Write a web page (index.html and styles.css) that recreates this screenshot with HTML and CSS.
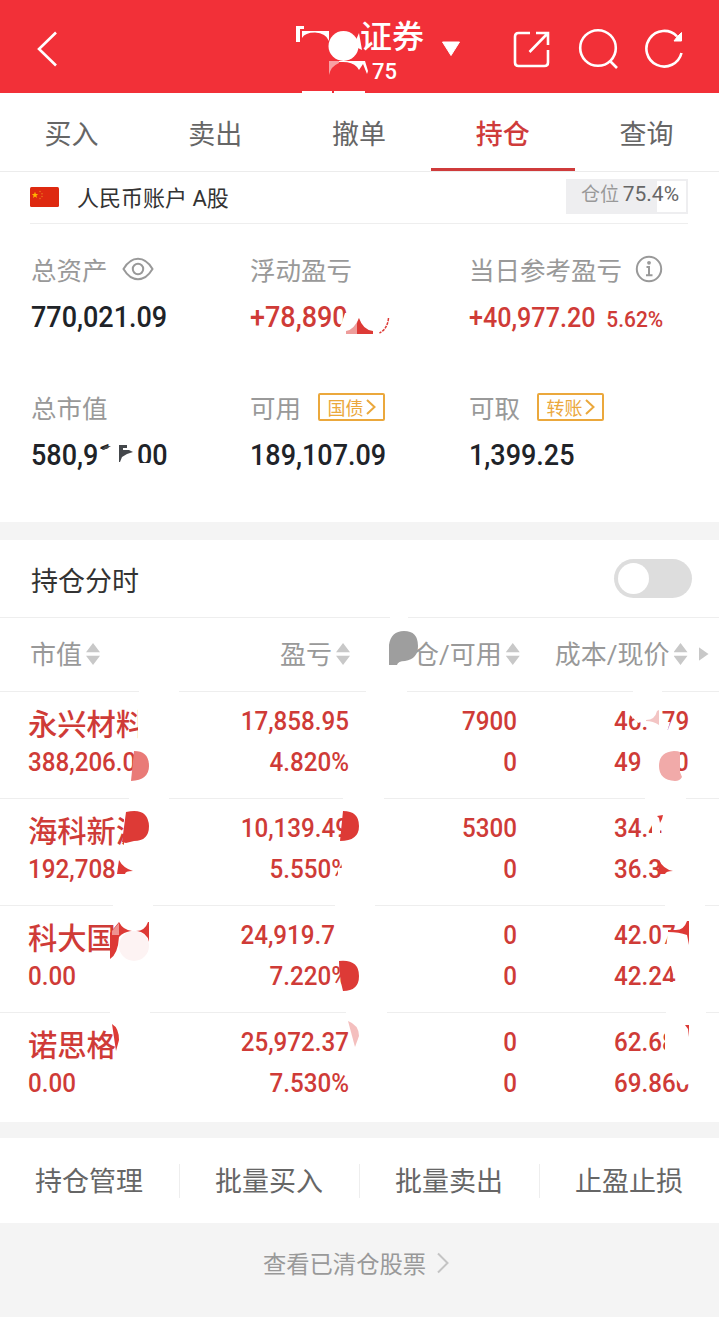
FILE: index.html
```html
<!DOCTYPE html>
<html lang="zh-CN">
<head>
  <meta charset="utf-8">
  <title>持仓</title>
  <link rel="stylesheet" href="styles.css">
</head>
<body>
  <header class="topbar">
    <svg class="back" width="24" height="38" viewBox="0 0 24 38"><path d="M21 2.500L4 19l17 16.500"/></svg>
    <div class="title">
      <h1>证券</h1>
      <p>75</p>
    </div>
    <svg class="caret" width="20" height="16" viewBox="0 0 20 16"><path d="M1.500 1h17L10 14.500z"/></svg>
    <svg class="tool share" width="40" height="40" viewBox="0 0 40 40"><path d="M18 4H6.500Q3 4 3 7.500v26Q3 37 6.500 37h26q3.500 0 3.500-3.500V21M24 4h12v12M35.500 4.500L17.500 23"/></svg>
    <svg class="tool search" width="42" height="42" viewBox="0 0 42 42"><circle cx="20" cy="20" r="17.800"/><path d="M32 33l7 7"/></svg>
    <svg class="tool reload" width="42" height="42" viewBox="0 0 42 42"><path d="M37.500 25A17.800 17.800 0 1 1 33 8.300"/><path class="solid" d="M37.500 4.500V13H30l3-4z"/></svg>
    <svg class="marks" width="719" height="94" viewBox="0 0 719 94">
      <path fill="#fff" d="M296 26h8v3h-4v13h-4zM302 31h27v10q-3-8-14-8.500Q305 32.500 302 38z"/>
      <path class="tint" d="M329 61h10v2q-8 3-10 12z"/>
      <path fill="#fff" d="M339 61h26l3 10-1 3-4-10-4 6-2-3q-5-5-14-5h-4z"/>
      <path fill="#fff" d="M356 40l3-7 3 17-6-3zM302 91h30v3h-30zM334 91h31v3h-31z"/>
      <circle fill="#fff" cx="343.500" cy="46" r="15"/>
    </svg>
  </header>

  <nav class="tabs">
    <a>买入</a>
    <a>卖出</a>
    <a>撤单</a>
    <a class="active">持仓</a>
    <a>查询</a>
  </nav>

  <section class="account">
    <svg class="flag" width="29" height="20" viewBox="0 0 29 20">
      <rect width="29" height="20" rx="1.500" fill="#de2910"/>
      <path d="M5 4.800l.9 2.200 2.300.1-1.800 1.500.6 2.300-2-1.300-2 1.300.6-2.300-1.800-1.500 2.300-.1z" fill="#ffb400"/>
      <g fill="#e8741c"><circle cx="10" cy="4.500" r=".8"/><circle cx="12" cy="6.800" r=".8"/><circle cx="12" cy="9.500" r=".8"/><circle cx="10" cy="11.500" r=".8"/></g>
    </svg>
    <span class="account-name">人民币账户 A股</span>
    <span class="position">仓位 <b>75.4%</b></span>
  </section>

  <section class="summary">
    <div class="item">
      <div class="label"><span>总资产</span>
        <svg class="eye" width="32" height="24" viewBox="0 0 32 24"><path d="M1.500 12Q7.500 1.800 16 1.800T30.500 12Q24.500 22.200 16 22.200T1.500 12z"/><circle cx="16" cy="12" r="5.200"/></svg>
      </div>
      <div class="value">770,021.09</div>
    </div>
    <div class="item">
      <div class="label"><span>浮动盈亏</span></div>
      <div class="value red">+78,890</div>
    </div>
    <div class="item">
      <div class="label"><span>当日参考盈亏</span>
        <svg class="info" width="28" height="28" viewBox="0 0 28 28"><circle cx="14" cy="14" r="12.200"/><path d="M11.500 12H14v8M11 20.200h6.500"/><circle class="dot" cx="14" cy="7.800" r="1.900"/></svg>
      </div>
      <div class="value red day">+40,977.20 <small>5.62%</small></div>
    </div>
    <div class="item">
      <div class="label"><span>总市值</span></div>
      <div class="value">580,91<span class="gap"></span>00</div>
    </div>
    <div class="item">
      <div class="label"><span>可用</span> <a class="tag">国债<svg width="10" height="18" viewBox="0 0 10 18"><path d="M1 2l7.500 7L1 16"/></svg></a></div>
      <div class="value">189,107.09</div>
    </div>
    <div class="item">
      <div class="label"><span>可取</span> <a class="tag">转账<svg width="10" height="18" viewBox="0 0 10 18"><path d="M1 2l7.500 7L1 16"/></svg></a></div>
      <div class="value">1,399.25</div>
    </div>
    <svg class="marks" width="719" height="298" viewBox="0 223 719 298">
      <path class="cover" d="M341 324l4-12h8v22h-18zM98 448h8l5-2v24h-13zM111 440h25v30h-25zM136 462h14v8h-14z"/>
      <path fill="#ee9d9b" d="M346 333v-3q8-1 13-13v16z"/>
      <path class="ink" d="M357 333v-11l2-5q4 12 14 13v3z"/>
      <path stroke="#dd3a36" stroke-width="1.500" stroke-dasharray="3 1" d="M388.500 317q-1 11-9 15"/>
      <path class="dark" d="M102 449l3-4h6l-7 4zM119 444h8v3h-4v2h6l4 2-6 2-5 3-2 5h-1z"/>
    </svg>
  </section>

  <section class="holdings">
    <div class="timeline">
      <h2>持仓分时</h2>
      <span class="switch"></span>
    </div>
    <div class="row head">
      <span>市值<i class="sort"></i></span>
      <span>盈亏<i class="sort"></i></span>
      <span>仓/可用<i class="sort"></i></span>
      <span>成本/现价<i class="sort"></i></span>
      <i class="more"></i>
    </div>
    <div class="row">
      <div><strong>永兴材料</strong><span class="num">388,206.0</span></div>
      <div class="num">17,858.95<br>4.820%</div>
      <div class="num">7900<br>0</div>
      <div class="num">46.<span class="gap wide"></span>79<br>49<span class="gap wider"></span>0</div>
    </div>
    <div class="row">
      <div><strong>海科新源</strong><span class="num">192,708</span></div>
      <div class="num">10,139.49<br>5.550%</div>
      <div class="num">5300<br>0</div>
      <div class="num">34.4<br>36.3</div>
    </div>
    <div class="row">
      <div><strong>科大国</strong><span class="num">0.00</span></div>
      <div class="num"><span class="cut">24,919.7</span><br>7.220%</div>
      <div class="num">0<br>0</div>
      <div class="num">42.07<br>42.24</div>
    </div>
    <div class="row">
      <div><strong>诺思格</strong><span class="num">0.00</span></div>
      <div class="num">25,972.37<br>7.530%</div>
      <div class="num">0<br>0</div>
      <div class="num">62.68<br>69.860</div>
    </div>
    <svg class="marks" width="719" height="582" viewBox="0 540 719 582">
      <g class="cover">
        <path d="M390 616h18v3h-18zM139 690h40v3h-40zM366 690h41v3h-41zM633 690h29v3h-29z"/>
        <path d="M129 797h40v3h-40zM343 797h41v3h-41zM645 797h41v3h-41z"/>
        <path d="M113 904h40v3h-40zM335 904h40v3h-40zM665 904h40v3h-40z"/>
        <path d="M110 1011h40v3h-40zM346 1011h41v3h-41zM666 1011h40v3h-40z"/>
        <path d="M138 706h14v36h-14zM629 708h12v14l-3 1-8-8zM664 722h6l-3 10h-3z"/>
        <path d="M124 812h28v36h-28zM338 868h4l-2-11h12v25h-14zM643 814h12v9l-14 6zM652 814h8v24h-8z"/>
        <path d="M668 932h14v16h-16zM670 962h10v12h-7zM668 982h12v8h-12zM665 1030h12v26h-12z"/>
        <path d="M672 1072l4 3q2-6 4-7h11v14q-6 6-12 1z"/>
      </g>
      <path fill="#9e9e9e" d="M389 665v-20q2-14 15-14 14 0 14 15 0 13-13 15-7 0-8 4z"/>
      <path fill="#e97a77" d="M134 751q15 0 15 15 0 14-18 15z"/>
      <path fill="#f1aaa9" d="M680 752q-2-1-6-1-15 1-15 15t16 15q5 0 7-4l-2-5z"/>
      <path fill="#f3c5c4" d="M646 720q9 0 11-9l2-1v15q-6-4-13-4z"/>
      <g class="ink">
        <path d="M126 812q22-5 23 14 0 15-15 15l-8 2-4-1q2-15 4-30zM343 811q16 0 16 15t-19 15z"/>
        <path d="M117 874l2-14q4 8 14 11-8 0-8 3zM658 874l1-14q4 9 14 11-7 0-8 3z"/>
        <path d="M657 816l6-1-1 4-2 4-1-5z"/>
        <path d="M110 959v-26l9-11q4 8 13 9-9 1-13 6-1 17-9 22zM136 931q9 0 12-9h1v20q-2-10-13-11zM339 961q20-2 20 15 0 15-16 15-4-15-4-30z"/>
        <path d="M668 930h8q8 0 11-9h2v24l-2-10q-8-3-19-3z"/>
        <path d="M112 1024q7 4 7 16l-3 11zM685 1025h4v12l-1-8z"/>
      </g>
      <circle cx="134" cy="946" r="15" fill="#fdf3f3"/>
      <path fill="#ee9391" d="M112 935v-4l7-8v12z"/>
      <path fill="#f4bfbe" d="M348 1021q11 4 11 15l-4 11z"/>
    </svg>
  </section>

  <nav class="actions">
    <a>持仓管理</a>
    <a>批量买入</a>
    <a>批量卖出</a>
    <a>止盈止损</a>
  </nav>

  <footer>
    查看已清仓股票
    <svg width="14" height="22" viewBox="0 0 14 22"><path d="M2 1.500L11.500 11 2 20.500"/></svg>
  </footer>
</body>
</html>
```

FILE: styles.css
```css
body {
  width: 719px;
  height: 1317px;
  margin: 0;
  background-color: #f4f4f4;
  color: #666;
  font-family: Roboto, "Noto Sans CJK SC", sans-serif;
}
h1, h2, p {
  margin: 0;
}
svg {
  fill: none;
  flex: none;
}
.marks {
  position: absolute;
  left: 0;
  top: 0;
  pointer-events: none;
}
.cover {
  fill: #fff;
}
.ink {
  fill: #dd3a36;
}
.dark {
  fill: #44474b;
}

/* top bar */
.topbar {
  position: relative;
  display: flex;
  height: 93px;
  align-items: center;
  background-color: #f23038;
  color: #fff;
}
.topbar svg {
  stroke: #fff;
  stroke-width: 2.6;
}
.topbar .marks {
  stroke: none;
}
.topbar .tint {
  fill: #f8a0a3;
}
.back {
  margin: 5px 0 0 35px;
}
.title {
  margin: 0 0 0 301px;
  width: 66px;
}
.title h1 {
  font-size: 32px;
  line-height: 40px;
  font-weight: 500;
  margin-top: 10px;
}
.title p {
  font-size: 22px;
  line-height: 30px;
  font-weight: 500;
  padding-left: 12px;
}
.topbar .caret {
  margin: 4px 0 0 15px;
  fill: #fff;
  stroke-linejoin: round;
  stroke-width: 1;
}
.share {
  margin: 5px 0 0 51px;
}
.search {
  margin: 4px 0 0 26px;
}
.reload {
  margin: 5px 0 0 24px;
}
.topbar .solid {
  fill: #fff;
  stroke-width: 1;
}

/* tabs */
.tabs {
  display: flex;
  height: 78px;
  border-bottom: 1px solid #ececec;
  background-color: #fff;
}
.tabs a {
  flex: 1;
  text-align: center;
  text-indent: -1px;
  font-size: 27px;
  line-height: 84px;
  height: 78px;
  box-sizing: border-box;
}
.tabs .active {
  color: #cf3b3b;
  font-weight: 500;
  border-bottom: 3px solid #cf3b3b;
}

/* account */
.account {
  display: flex;
  align-items: center;
  height: 52px;
  padding: 0 31px 0 30px;
  background: linear-gradient(#eee, #eee) 30px 100% / 658px 1px no-repeat #fff;
}
.flag {
  margin-top: -2px;
}
.account-name {
  margin: -4px 0 0 18px;
  font-size: 22px;
  color: #333;
}
.position {
  box-sizing: border-box;
  width: 122px;
  height: 35px;
  margin: -3px 0 0 auto;
  padding-left: 13px;
  border: 2px solid #eeeef0;
  background: linear-gradient(to right, #eeeef0 75.4%, #fff 75.4%);
  color: #999;
  font-size: 19px;
  line-height: 27px;
  white-space: nowrap;
}
.position b {
  color: #666;
  font-size: 21px;
  font-weight: 400;
  margin-left: -1px;
}

/* summary */
.summary {
  position: relative;
  display: grid;
  grid-template-columns: 219px 219px 1fr;
  grid-auto-rows: 89px;
  row-gap: 49px;
  box-sizing: border-box;
  height: 298px;
  padding: 26px 0 0 31px;
  background-color: #fff;
}
.label {
  display: flex;
  align-items: center;
  height: 38px;
  margin-bottom: 6px;
  color: #999;
  font-size: 25.5px;
}
.label span {
  margin-top: -2px;
}
.value {
  font-size: 29px;
  line-height: 46px;
  font-weight: 500;
  color: #202328;
  white-space: nowrap;
  transform: scaleX(.93);
  transform-origin: left;
}
.value.red {
  color: #cf3b37;
}
.value.day {
  font-size: 27px;
  line-height: 48px;
}
.day small {
  margin-left: 5px;
  font-size: 22.5px;
}
.gap {
  display: inline-block;
  width: 25px;
}
.eye, .info {
  stroke: #999;
  stroke-width: 2;
}
.eye {
  margin-left: 14px;
}
.info {
  margin-left: 13px;
}
.info .dot {
  fill: #999;
  stroke: none;
}
.tag {
  display: flex;
  align-items: center;
  justify-content: center;
  box-sizing: border-box;
  width: 67px;
  height: 28px;
  margin-left: 17px;
  border: 2px solid #eba83c;
  border-radius: 2px;
  color: #eba83c;
  font-size: 18px;
}
.tag svg {
  margin-left: 2px;
  stroke: #eba83c;
  stroke-width: 2;
}

/* holdings */
.holdings {
  position: relative;
  height: 582px;
  margin: 18px 0 16px;
  background-color: #fff;
}
.timeline {
  display: flex;
  align-items: center;
  justify-content: space-between;
  height: 77px;
  padding: 0 27px 0 31px;
  border-bottom: 1px solid #eee;
}
.timeline h2 {
  color: #333;
  font-size: 27px;
  font-weight: 400;
  padding-top: 2px;
}
.switch {
  box-sizing: border-box;
  width: 78px;
  height: 39px;
  padding: 4px;
  border-radius: 20px;
  background-color: #ddd;
}
.switch::before {
  content: "";
  display: block;
  width: 31px;
  height: 31px;
  border-radius: 50%;
  background-color: #fff;
}
.row {
  display: grid;
  grid-template-columns: 150px 171px 168px 1fr;
  box-sizing: border-box;
  height: 107px;
  padding: 9px 0 0 28px;
  border-top: 1px solid #eee;
  color: #cf3b37;
  font-size: 26px;
  font-weight: 500;
  line-height: 40.5px;
}
.num {
  transform: scaleX(.93);
  transform-origin: right;
  text-align: right;
}
span.num {
  display: block;
  transform-origin: left;
  text-align: left;
}
.num:nth-child(4) {
  margin-left: 97px;
  transform-origin: left;
  text-align: left;
}
.row strong {
  display: block;
  height: 41px;
  line-height: 49px;
  font-size: 29.3px;
  font-weight: 500;
  white-space: nowrap;
}
.cut {
  margin-right: 15px;
}
.wide {
  width: 14.600px;
}
.wider {
  width: 36px;
}
.row.head {
  display: flex;
  position: relative;
  height: 73px;
  padding: 0 0 0 30px;
  border: 0;
  color: #999;
  font-size: 26px;
  font-weight: 400;
  line-height: 75px;
}
.row.head span {
  white-space: nowrap;
}
.row.head span:nth-child(2) {
  margin-left: 180px;
}
.row.head span:nth-child(3) {
  margin-left: 63px;
}
.row.head span:nth-child(4) {
  margin-left: 35px;
}
.sort {
  display: inline-block;
  width: 14px;
  height: 22px;
  margin-left: 4px;
  vertical-align: -1px;
  background-color: #c8c8c8;
  clip-path: polygon(50% 0, 100% 42%, 0 42%, 0 58%, 100% 58%, 50% 100%, 0 58%, 0 42%);
}
.more {
  width: 10px;
  height: 14px;
  margin: 29px 0 0 11px;
  background-color: #c8c8c8;
  clip-path: polygon(0 0, 100% 50%, 0 100%);
}

/* bottom */
.actions {
  display: flex;
  align-items: center;
  height: 85px;
  background-color: #fff;
}
.actions a {
  flex: 1;
  height: 34px;
  font-size: 27px;
  line-height: 37px;
  text-align: center;
  text-indent: -1px;
}
.actions a:not(:last-child) {
  border-right: 1px solid #eee;
}
footer {
  display: flex;
  align-items: center;
  justify-content: center;
  height: 80px;
  padding-right: 6px;
  color: #999;
  font-size: 23.3px;
}
footer svg {
  margin-left: 10px;
  stroke: #c4c4c4;
  stroke-width: 2;
}
```
